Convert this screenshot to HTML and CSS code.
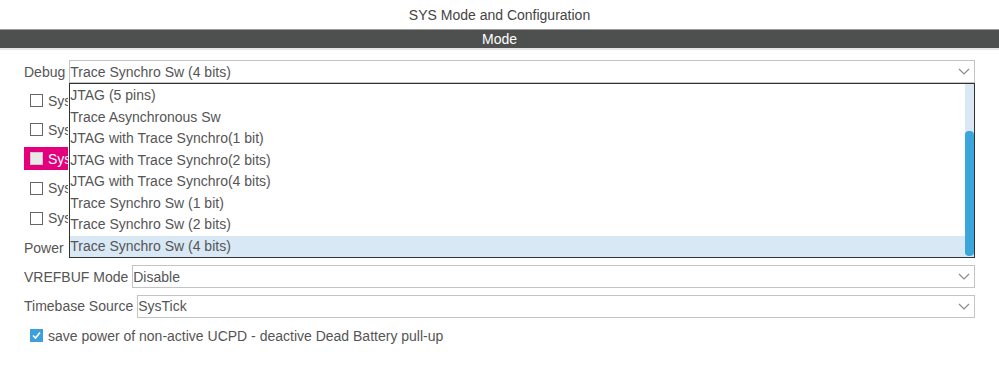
FILE: index.html
```html
<!DOCTYPE html>
<html lang="en">
<head>
    <meta charset="UTF-8">
    <meta name="viewport" content="width=device-width, initial-scale=1.0">
    <title>SYS Mode and Configuration</title>
    <link rel="stylesheet" href="styles.css">
</head>
<body>
    <div class="title">SYS Mode and Configuration</div>
    <div class="section-bar">Mode</div>
    <div class="form">
        <div class="row">
            <label class="field-label">Debug</label>
            <div class="select-wrap">
                <div class="select">
                    <span>Trace Synchro Sw (4 bits)</span>
                    <svg class="chevron" width="12" height="7" viewBox="0 0 12 7"><polyline points="1,1 6,6 11,1" fill="none" stroke="#8a8a8a" stroke-width="1.2"/></svg>
                </div>
                <!-- open list, lies over the rows below -->
                <div class="dropdown">
                    <ul class="options">
                        <li>JTAG (5 pins)</li>
                        <li>Trace Asynchronous Sw</li>
                        <li>JTAG with Trace Synchro(1 bit)</li>
                        <li>JTAG with Trace Synchro(2 bits)</li>
                        <li>JTAG with Trace Synchro(4 bits)</li>
                        <li>Trace Synchro Sw (1 bit)</li>
                        <li>Trace Synchro Sw (2 bits)</li>
                        <li class="selected">Trace Synchro Sw (4 bits)</li>
                    </ul>
                    <div class="scrollbar"><div class="thumb"></div></div>
                </div>
            </div>
        </div>
        <div class="row">
            <div class="check-item clipped"><span class="box"></span>Sys</div>
        </div>
        <div class="row">
            <div class="check-item clipped"><span class="box"></span>Sys</div>
        </div>
        <div class="row">
            <div class="check-item clipped marked"><span class="box"></span>Sys</div>
        </div>
        <div class="row tall">
            <div class="check-item clipped"><span class="box"></span>Sys</div>
        </div>
        <div class="row tall">
            <div class="check-item clipped"><span class="box"></span>Sys</div>
        </div>
        <div class="row">
            <label class="field-label">Power</label>
        </div>
        <div class="row">
            <label class="field-label">VREFBUF Mode</label>
            <div class="select">
                <span>Disable</span>
                <svg class="chevron" width="12" height="7" viewBox="0 0 12 7"><polyline points="1,1 6,6 11,1" fill="none" stroke="#8a8a8a" stroke-width="1.2"/></svg>
            </div>
        </div>
        <div class="row tall">
            <label class="field-label">Timebase Source</label>
            <div class="select">
                <span>SysTick</span>
                <svg class="chevron" width="12" height="7" viewBox="0 0 12 7"><polyline points="1,1 6,6 11,1" fill="none" stroke="#8a8a8a" stroke-width="1.2"/></svg>
            </div>
        </div>
        <div class="row">
            <div class="check-item">
                <span class="box checked">
                    <svg width="11" height="11" viewBox="0 0 11 11"><polyline points="2,5.5 4.5,8 9,2.5" fill="none" stroke="#fff" stroke-width="1.6"/></svg>
                </span>save power of non-active UCPD - deactive Dead Battery pull-up
            </div>
        </div>
    </div>
</body>
</html>
```

FILE: styles.css
```css
body {
    margin: 0;
    font-family: "Liberation Sans", Arial, sans-serif;
    font-size: 14px;
    color: #555;
    background: #fff;
}
.title {
    height: 29px;
    line-height: 30px;
    text-align: center;
    color: #444;
}
.section-bar {
    height: 18px;
    line-height: 18px;
    background-color: #4e504f;
    border-top: 1px solid #9a9a9a;
    border-bottom: 2px solid #e6e6e6;
    color: #fff;
    text-align: center;
}
.form {
    padding: 7px 24px 0 24px;
    display: flex;
    flex-direction: column;
}
.row {
    height: 29px;
    display: flex;
    align-items: center;
}
.row.tall {
    height: 30px;
}
.field-label {
    white-space: nowrap;
    margin-right: 4px;
}
.select-wrap {
    flex: 1;
    position: relative;
    z-index: 1;
}
.select {
    flex: 1;
    height: 23px;
    box-sizing: border-box;
    border: 1px solid #c4c4c4;
    display: flex;
    align-items: center;
    justify-content: space-between;
    padding: 0 4px 0 0;
    color: #555;
    background: #fff;
}
.dropdown {
    position: absolute;
    top: 23px;
    left: 0;
    right: 0;
    height: 175px;
    box-sizing: border-box;
    border: 1px solid #333;
    background: #fff;
}
.options {
    list-style: none;
    margin: 0;
    padding: 1px 9px 0 0;
}
.options li {
    height: 21.5px;
    line-height: 21.5px;
    white-space: nowrap;
}
.options li.selected {
    background-color: #d9e8f5;
}
.scrollbar {
    position: absolute;
    top: 0;
    right: 0;
    bottom: 0;
    width: 9px;
    background-color: #dae8f5;
}
.thumb {
    position: absolute;
    top: 47px;
    bottom: 1px;
    left: 0;
    right: 0;
    border-radius: 4px;
    background-color: #3aa6dc;
}
.check-item {
    height: 23px;
    display: flex;
    align-items: center;
    padding: 0 6px;
    white-space: nowrap;
}
.check-item.clipped {
    width: 44px;
    box-sizing: border-box;
    overflow: hidden;
    padding-right: 0;
}
.check-item.marked {
    background-color: #e4007d;
    color: #fff;
}
.box {
    flex: none;
    width: 13px;
    height: 13px;
    box-sizing: border-box;
    border: 1px solid #666;
    background: #fff;
    margin-right: 5px;
    display: flex;
    align-items: center;
    justify-content: center;
}
.check-item.marked .box {
    background: #e8e8e8;
    border-color: #c8c8c8;
}
.box.checked {
    background-color: #3d9fdc;
    border-color: #3d9fdc;
}
```
